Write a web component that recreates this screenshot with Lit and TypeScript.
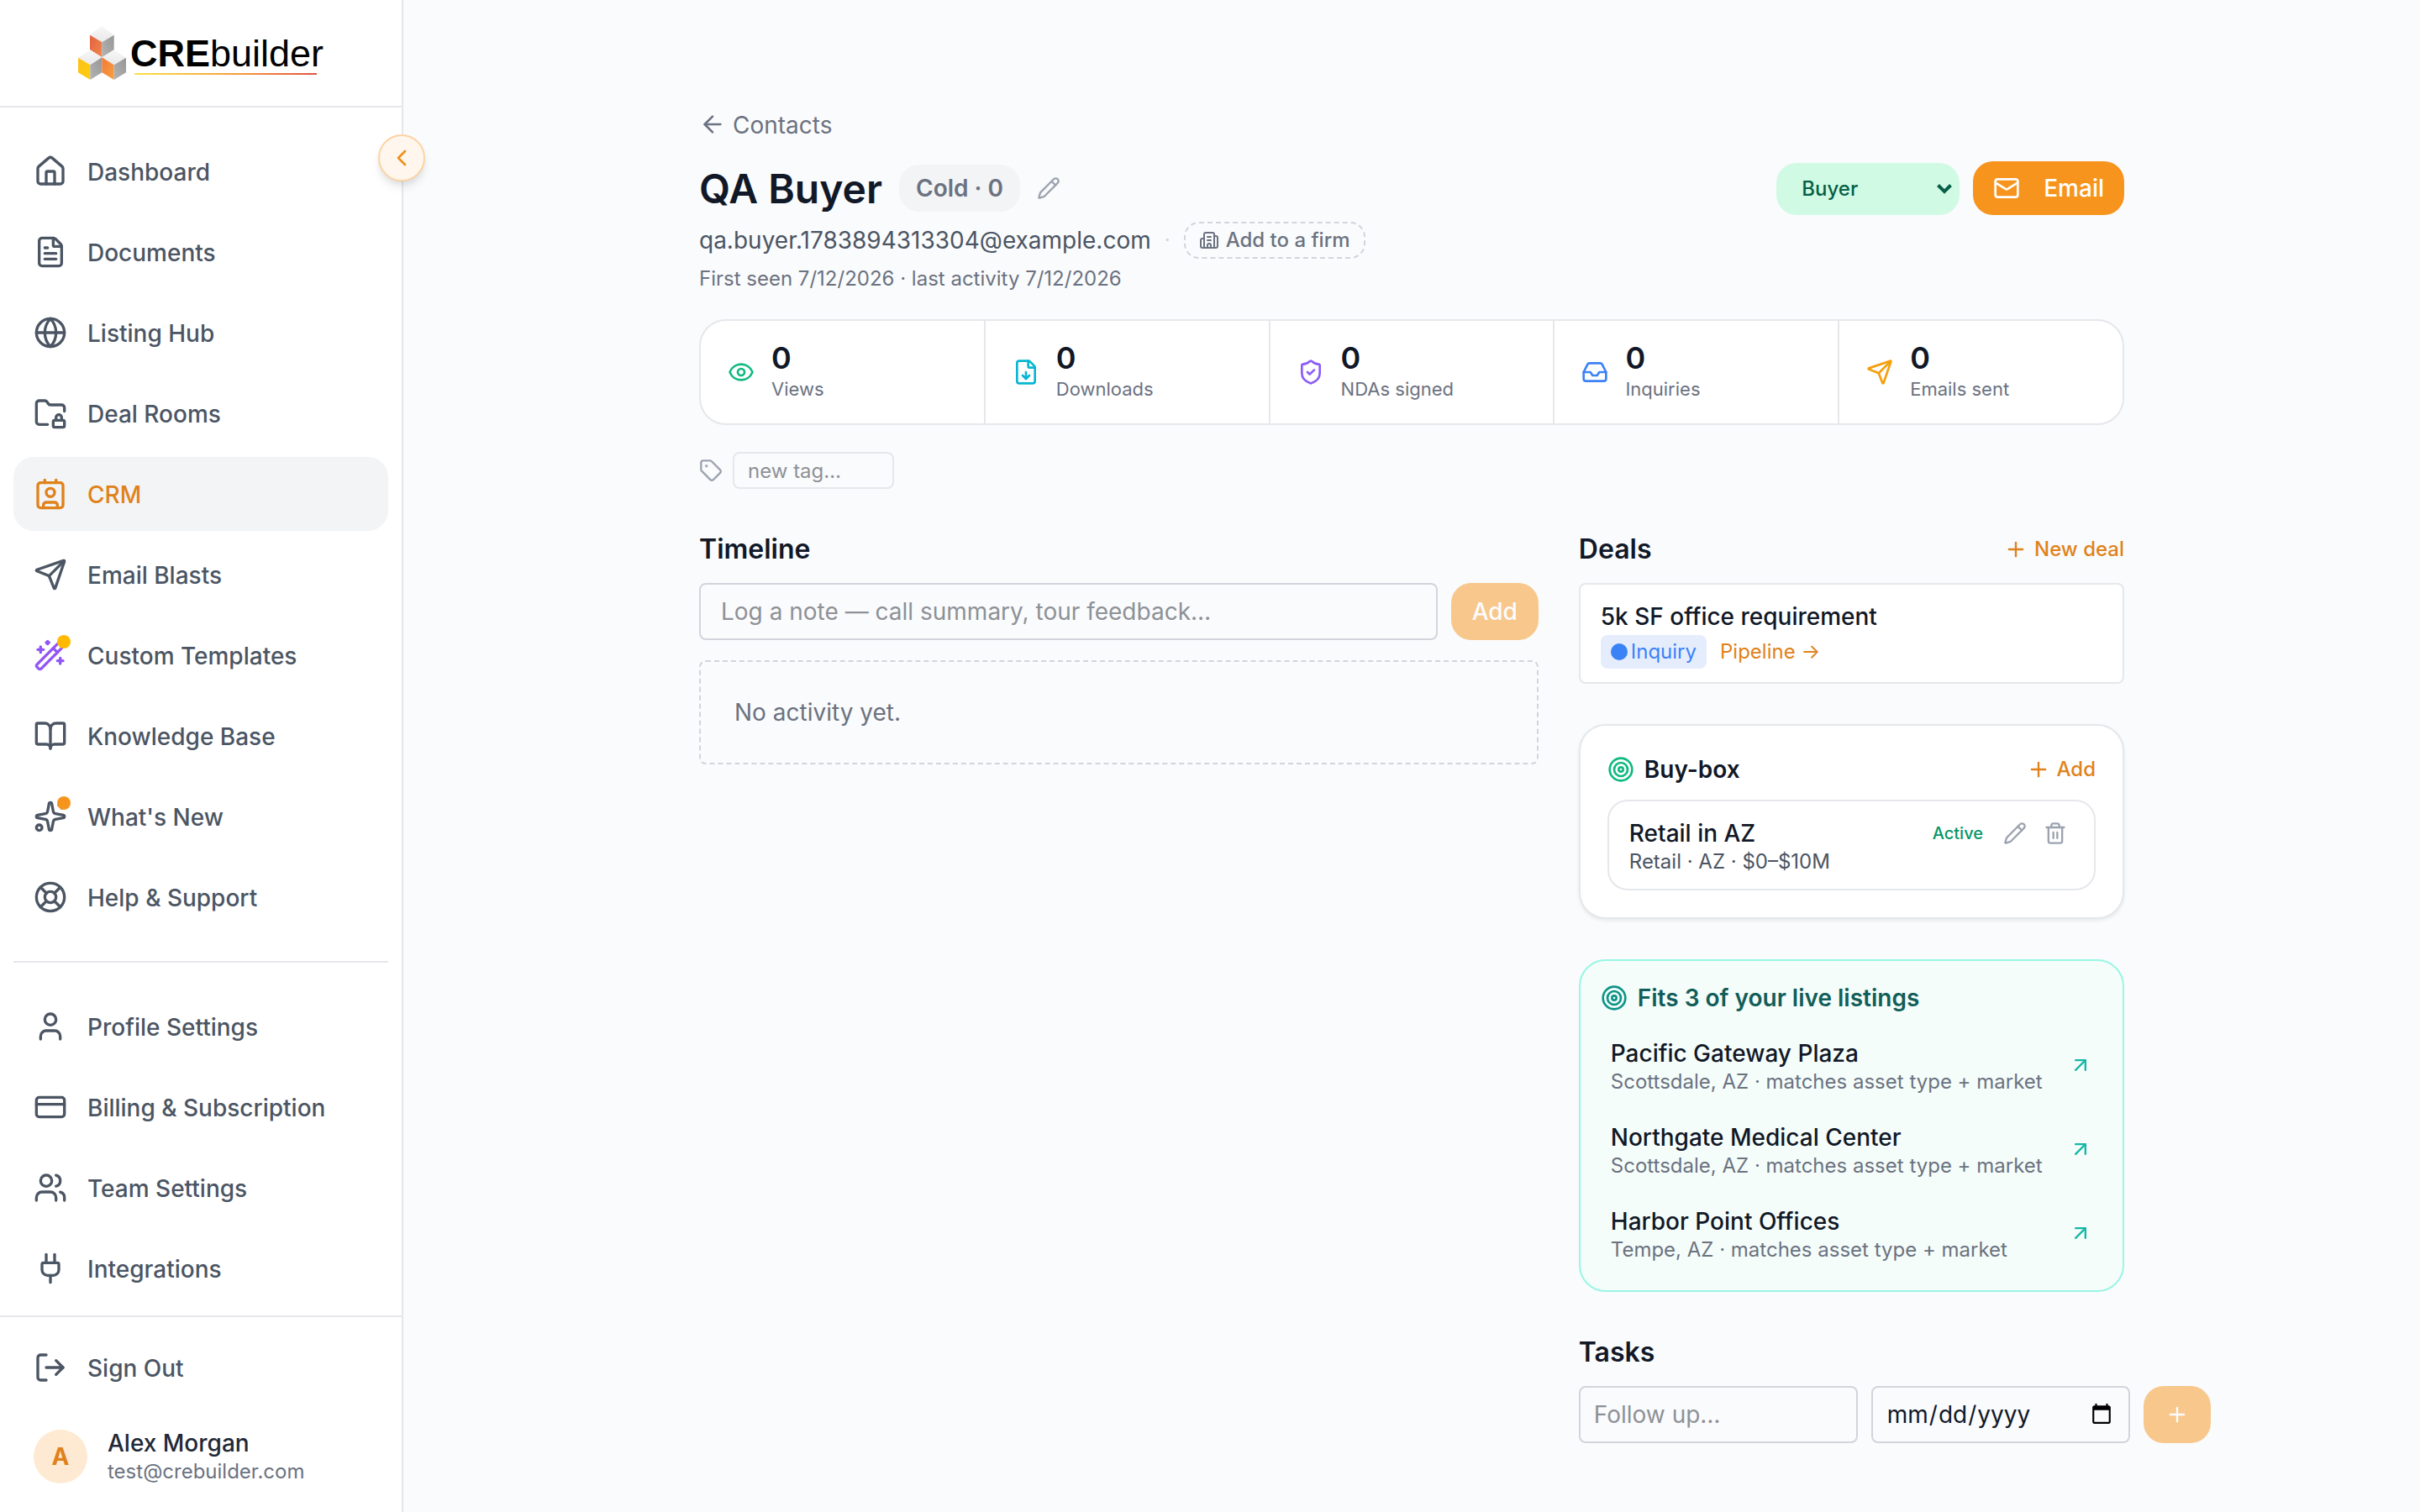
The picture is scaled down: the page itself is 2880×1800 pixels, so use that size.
import { LitElement, html, css, svg, nothing, type SVGTemplateResult } from "lit";
import { customElement, property } from "lit/decorators.js";

const ICONS: Record<string, SVGTemplateResult> = {
  house: svg`<path d="M15 21v-8a1 1 0 0 0-1-1h-4a1 1 0 0 0-1 1v8"/><path d="M3 10a2 2 0 0 1 .709-1.528l7-6a2 2 0 0 1 2.582 0l7 6A2 2 0 0 1 21 10v9a2 2 0 0 1-2 2H5a2 2 0 0 1-2-2z"/>`,
  fileText: svg`<path d="M6 22a2 2 0 0 1-2-2V4a2 2 0 0 1 2-2h8a2.4 2.4 0 0 1 1.704.706l3.588 3.588A2.4 2.4 0 0 1 20 8v12a2 2 0 0 1-2 2z"/><path d="M14 2v5a1 1 0 0 0 1 1h5"/><path d="M10 9H8"/><path d="M16 13H8"/><path d="M16 17H8"/>`,
  globe: svg`<circle cx="12" cy="12" r="10"/><path d="M12 2a14.5 14.5 0 0 0 0 20 14.5 14.5 0 0 0 0-20"/><path d="M2 12h20"/>`,
  folderLock: svg`<rect width="8" height="5" x="14" y="17" rx="1"/><path d="M10 20H4a2 2 0 0 1-2-2V5a2 2 0 0 1 2-2h3.9a2 2 0 0 1 1.69.9l.81 1.2a2 2 0 0 0 1.67.9H20a2 2 0 0 1 2 2v2.5"/><path d="M20 17v-2a2 2 0 1 0-4 0v2"/>`,
  contact: svg`<path d="M16 2v2"/><path d="M7 22v-2a2 2 0 0 1 2-2h6a2 2 0 0 1 2 2v2"/><path d="M8 2v2"/><circle cx="12" cy="11" r="3"/><rect x="3" y="4" width="18" height="18" rx="2"/>`,
  send: svg`<path d="M14.536 21.686a.5.5 0 0 0 .937-.024l6.5-19a.496.496 0 0 0-.635-.635l-19 6.5a.5.5 0 0 0-.024.937l7.93 3.18a2 2 0 0 1 1.112 1.11z"/><path d="m21.854 2.147-10.94 10.939"/>`,
  wand: svg`<path d="m21.64 3.64-1.28-1.28a1.21 1.21 0 0 0-1.72 0L2.36 18.64a1.21 1.21 0 0 0 0 1.72l1.28 1.28a1.2 1.2 0 0 0 1.72 0L21.64 5.36a1.2 1.2 0 0 0 0-1.72"/><path d="m14 7 3 3"/><path d="M5 6v4"/><path d="M19 14v4"/><path d="M10 2v2"/><path d="M7 8H3"/><path d="M21 16h-4"/><path d="M11 3H9"/>`,
  book: svg`<path d="M12 7v14"/><path d="M3 18a1 1 0 0 1-1-1V4a1 1 0 0 1 1-1h5a4 4 0 0 1 4 4 4 4 0 0 1 4-4h5a1 1 0 0 1 1 1v13a1 1 0 0 1-1 1h-6a3 3 0 0 0-3 3 3 3 0 0 0-3-3z"/>`,
  sparkles: svg`<path d="M11.017 2.814a1 1 0 0 1 1.966 0l1.051 5.558a2 2 0 0 0 1.594 1.594l5.558 1.051a1 1 0 0 1 0 1.966l-5.558 1.051a2 2 0 0 0-1.594 1.594l-1.051 5.558a1 1 0 0 1-1.966 0l-1.051-5.558a2 2 0 0 0-1.594-1.594l-5.558-1.051a1 1 0 0 1 0-1.966l5.558-1.051a2 2 0 0 0 1.594-1.594z"/><path d="M20 2v4"/><path d="M22 4h-4"/><circle cx="4" cy="20" r="2"/>`,
  lifeBuoy: svg`<circle cx="12" cy="12" r="10"/><path d="m4.93 4.93 4.24 4.24"/><path d="m14.83 9.17 4.24-4.24"/><path d="m14.83 14.83 4.24 4.24"/><path d="m9.17 14.83-4.24 4.24"/><circle cx="12" cy="12" r="4"/>`,
  user: svg`<path d="M19 21v-2a4 4 0 0 0-4-4H9a4 4 0 0 0-4 4v2"/><circle cx="12" cy="7" r="4"/>`,
  card: svg`<rect width="20" height="14" x="2" y="5" rx="2"/><path d="M2 10h20"/>`,
  users: svg`<path d="M16 21v-2a4 4 0 0 0-4-4H6a4 4 0 0 0-4 4v2"/><circle cx="9" cy="7" r="4"/><path d="M16 3.128a4 4 0 0 1 0 7.744"/><path d="M22 21v-2a4 4 0 0 0-3-3.87"/>`,
  plug: svg`<path d="M12 22v-5"/><path d="M15 8V2"/><path d="M17 8a1 1 0 0 1 1 1v4a4 4 0 0 1-4 4h-4a4 4 0 0 1-4-4V9a1 1 0 0 1 1-1z"/><path d="M9 8V2"/>`,
  logOut: svg`<path d="m16 17 5-5-5-5"/><path d="M21 12H9"/><path d="M9 21H5a2 2 0 0 1-2-2V5a2 2 0 0 1 2-2h4"/>`,
  chevronLeft: svg`<path d="m15 18-6-6 6-6"/>`,
  chevronDown: svg`<path d="m4.5 6.5 7.5 7.5 7.5-7.5" stroke-linecap="butt" stroke-linejoin="miter"/>`,
  arrowLeft: svg`<path d="m12 19-7-7 7-7"/><path d="M19 12H5"/>`,
  arrowUpRight: svg`<path d="M7 7h10v10"/><path d="M7 17 17 7"/>`,
  pencil: svg`<path d="M21.174 6.812a1 1 0 0 0-3.986-3.987L3.842 16.174a2 2 0 0 0-.5.83l-1.321 4.352a.5.5 0 0 0 .623.622l4.353-1.32a2 2 0 0 0 .83-.497z"/><path d="m15 5 4 4"/>`,
  building: svg`<path d="M10 12h4"/><path d="M10 8h4"/><path d="M14 21v-3a2 2 0 0 0-4 0v3"/><path d="M6 10H4a2 2 0 0 0-2 2v7a2 2 0 0 0 2 2h16a2 2 0 0 0 2-2V9a2 2 0 0 0-2-2h-2"/><path d="M6 21V5a2 2 0 0 1 2-2h8a2 2 0 0 1 2 2v16"/>`,
  mail: svg`<path d="m22 7-8.991 5.727a2 2 0 0 1-2.009 0L2 7"/><rect x="2" y="4" width="20" height="16" rx="2"/>`,
  eye: svg`<path d="M2.062 12.348a1 1 0 0 1 0-.696 10.75 10.75 0 0 1 19.876 0 1 1 0 0 1 0 .696 10.75 10.75 0 0 1-19.876 0"/><circle cx="12" cy="12" r="3"/>`,
  fileDown: svg`<path d="M6 22a2 2 0 0 1-2-2V4a2 2 0 0 1 2-2h8a2.4 2.4 0 0 1 1.704.706l3.588 3.588A2.4 2.4 0 0 1 20 8v12a2 2 0 0 1-2 2z"/><path d="M14 2v5a1 1 0 0 0 1 1h5"/><path d="M12 18v-6"/><path d="m9 15 3 3 3-3"/>`,
  shield: svg`<path d="M20 13c0 5-3.5 7.5-7.66 8.95a1 1 0 0 1-.67-.01C7.5 20.5 4 18 4 13V6a1 1 0 0 1 1-1c2 0 4.5-1.2 6.24-2.72a1.17 1.17 0 0 1 1.52 0C14.51 3.81 17 5 19 5a1 1 0 0 1 1 1z"/><path d="m9 12 2 2 4-4"/>`,
  inbox: svg`<path d="M22 12h-6l-2 3h-4l-2-3H2"/><path d="M5.45 5.11 2 12v6a2 2 0 0 0 2 2h16a2 2 0 0 0 2-2v-6l-3.45-6.89A2 2 0 0 0 16.76 4H7.24a2 2 0 0 0-1.79 1.11z"/>`,
  tag: svg`<path d="M12.586 2.586A2 2 0 0 0 11.172 2H4a2 2 0 0 0-2 2v7.172a2 2 0 0 0 .586 1.414l8.704 8.704a2.426 2.426 0 0 0 3.42 0l6.58-6.58a2.426 2.426 0 0 0 0-3.42z"/><circle cx="7.5" cy="7.5" r=".5" fill="currentColor"/>`,
  plus: svg`<path d="M5 12h14"/><path d="M12 5v14"/>`,
  target: svg`<circle cx="12" cy="12" r="10"/><circle cx="12" cy="12" r="6"/><circle cx="12" cy="12" r="2"/>`,
  trash: svg`<path d="M10 11v6"/><path d="M14 11v6"/><path d="M19 6v14a2 2 0 0 1-2 2H7a2 2 0 0 1-2-2V6"/><path d="M3 6h18"/><path d="M8 6V4a2 2 0 0 1 2-2h4a2 2 0 0 1 2 2v2"/>`,
};

const icon = (name: string, size: number, weight = 2) => html`<svg
  width=${size}
  height=${size}
  viewBox="0 0 24 24"
  fill="none"
  stroke="currentColor"
  stroke-width=${weight}
  stroke-linecap="round"
  stroke-linejoin="round"
  aria-hidden="true"
>${ICONS[name]}</svg>`;

const shared = css`
  *,
  *::before,
  *::after {
    box-sizing: border-box;
  }
  svg {
    display: block;
    flex: none;
  }
  a {
    color: inherit;
    text-decoration: none;
  }
  h1,
  h2,
  p,
  ul {
    margin: 0;
    padding: 0;
  }
  ul {
    list-style: none;
  }
  button,
  input,
  select {
    font: inherit;
    color: inherit;
    margin: 0;
  }
  button {
    border: 0;
    padding: 0;
    background: none;
    cursor: pointer;
  }
`;

interface NavItem {
  icon: string;
  label: string;
  active?: boolean;
  dot?: string;
  tint?: string;
}

const MAIN_NAV: NavItem[] = [
  { icon: "house", label: "Dashboard" },
  { icon: "fileText", label: "Documents" },
  { icon: "globe", label: "Listing Hub" },
  { icon: "folderLock", label: "Deal Rooms" },
  { icon: "contact", label: "CRM", active: true },
  { icon: "send", label: "Email Blasts" },
  { icon: "wand", label: "Custom Templates", dot: "amber", tint: "violet" },
  { icon: "book", label: "Knowledge Base" },
  { icon: "sparkles", label: "What's New", dot: "orange" },
  { icon: "lifeBuoy", label: "Help & Support" },
];

const SETTINGS_NAV: NavItem[] = [
  { icon: "user", label: "Profile Settings" },
  { icon: "card", label: "Billing & Subscription" },
  { icon: "users", label: "Team Settings" },
  { icon: "plug", label: "Integrations" },
];

@customElement("side-bar")
export class SideBar extends LitElement {
  static styles = [
    shared,
    css`
      :host {
        position: sticky;
        top: 0;
        display: flex;
        flex-direction: column;
        flex: none;
        box-sizing: border-box;
        width: 480px;
        height: 100vh;
        background: #fff;
        border-right: 2px solid #e5e7eb;
        color: #4b5563;
        font-size: 28px;
        font-weight: 500;
      }
      .brand {
        display: flex;
        flex: none;
        justify-content: center;
        align-items: center;
        gap: 5px;
        height: 128px;
        border-bottom: 2px solid #e5e7eb;
      }
      .wordmark {
        display: flex;
        flex-direction: column;
        padding-top: 4px;
        font-family: "Liberation Sans", Arial, sans-serif;
        font-size: 45px;
        font-weight: 400;
        line-height: 46px;
        color: #000;
      }
      .rule {
        height: 2px;
        margin: 0 8px 0 5px;
        background: linear-gradient(90deg, #fde047, #f59e3b 55%, #e0523f);
      }
      nav {
        flex: 1;
        min-height: 0;
        overflow: hidden;
        padding: 32px 16px 0;
      }
      .list {
        display: flex;
        flex-direction: column;
        gap: 8px;
      }
      .split {
        height: 2px;
        margin: 32px 0;
        background: #e5e7eb;
      }
      .item {
        display: flex;
        align-items: center;
        gap: 24px;
        width: 100%;
        height: 88px;
        padding: 0 24px;
        border-radius: 24px;
        text-align: left;
      }
      .item.active {
        background: #f3f4f6;
        color: #e0821a;
      }
      .label {
        padding-top: 2px;
      }
      .glyph {
        position: relative;
      }
      .violet {
        color: #9155f5;
      }
      .dot {
        position: absolute;
        top: -4px;
        right: -4px;
        width: 16px;
        height: 16px;
        border-radius: 50%;
      }
      .dot.amber {
        background: #ffb900;
      }
      .dot.orange {
        background: #f7941d;
      }
      footer {
        flex: none;
        padding: 16px 16px 32px;
        border-top: 2px solid #e5e7eb;
      }
      .account {
        display: flex;
        align-items: center;
        gap: 24px;
        padding: 28px 24px 0;
      }
      .avatar {
        display: grid;
        place-items: center;
        width: 64px;
        height: 64px;
        border-radius: 50%;
        background: #feead3;
        color: #e0821a;
        font-weight: 700;
      }
      .who {
        line-height: 36px;
        color: #1f2937;
      }
      .mail {
        font-size: 24px;
        font-weight: 400;
        line-height: 32px;
        color: #6b7280;
      }
      .collapse {
        position: absolute;
        top: 160px;
        right: -28px;
        display: grid;
        place-items: center;
        width: 56px;
        height: 56px;
        border: 2px solid #fdd3a3;
        border-radius: 50%;
        background: #fff7ed;
        color: #f0901c;
        box-shadow: 0 8px 12px -2px rgb(0 0 0 / 0.1), 0 4px 8px -4px rgb(0 0 0 / 0.1);
      }
    `,
  ];

  private renderItem(item: NavItem) {
    return html`<li>
      <a class="item ${item.active ? "active" : ""}" href="#" aria-current=${item.active ? "page" : nothing}>
        <span class="glyph ${item.tint ?? ""}"
          >${icon(item.icon, 40)}${item.dot ? html`<span class="dot ${item.dot}"></span>` : nothing}</span
        >
        <span class="label">${item.label}</span>
      </a>
    </li>`;
  }

  render() {
    return html`
      <a class="brand" href="#">
        <svg width="57" height="64" viewBox="42 36 171 192" aria-hidden="true">
          <defs>
            <linearGradient id="top" x1="0" y1="0" x2="0" y2="1">
              <stop offset="0" stop-color="#f7f7f7" />
              <stop offset="1" stop-color="#e9e9e9" />
            </linearGradient>
            <linearGradient id="side" x1="0" y1="1" x2="1" y2="0">
              <stop offset="0" stop-color="#b4b4b4" />
              <stop offset="1" stop-color="#969696" />
            </linearGradient>
            <linearGradient id="red" x1="0" y1="0" x2="1" y2="1">
              <stop offset="0" stop-color="#e2603f" />
              <stop offset="1" stop-color="#f28a4c" />
            </linearGradient>
            <linearGradient id="gold" x1="0" y1="0" x2="1" y2="1">
              <stop offset="0" stop-color="#fbc11c" />
              <stop offset="1" stop-color="#ffce0a" />
            </linearGradient>
            <linearGradient id="amber" x1="0" y1="0" x2="1" y2="1">
              <stop offset="0" stop-color="#ee7a3c" />
              <stop offset="1" stop-color="#f9a03c" />
            </linearGradient>
          </defs>
          <path fill="url(#top)" d="M127 36 170 68 127 94 84 68Z" />
          <path fill="url(#red)" d="M84 68 127 94V148L84 121Z" />
          <path fill="url(#side)" d="M170 68 127 94V148L170 121Z" />
          <path fill="url(#top)" d="M85 121 127 148 85 175 42 149Z" />
          <path fill="url(#gold)" d="M42 149 85 175V228L42 202Z" />
          <path fill="url(#side)" d="M127 148 85 175V228L127 202Z" />
          <path fill="url(#top)" d="M170 121 213 149 170 175 127 148Z" />
          <path fill="url(#amber)" d="M127 148 170 175V228L127 202Z" />
          <path fill="url(#side)" d="M213 149 170 175V228L213 202Z" />
        </svg>
        <span class="wordmark">
          <span><b>CRE</b>builder</span>
          <span class="rule"></span>
        </span>
      </a>
      <nav aria-label="Main">
        <ul class="list">
          ${MAIN_NAV.map((item) => this.renderItem(item))}
        </ul>
        <div class="split"></div>
        <ul class="list">
          ${SETTINGS_NAV.map((item) => this.renderItem(item))}
        </ul>
      </nav>
      <footer>
        <button class="item" type="button">${icon("logOut", 40)}<span class="label">Sign Out</span></button>
        <div class="account">
          <span class="avatar">A</span>
          <div>
            <p class="who">Alex Morgan</p>
            <p class="mail">test@crebuilder.com</p>
          </div>
        </div>
      </footer>
      <button class="collapse" type="button" aria-label="Collapse sidebar">${icon("chevronLeft", 32)}</button>
    `;
  }
}

@customElement("stat-tile")
export class StatTile extends LitElement {
  @property() glyph = "";
  @property() label = "";
  @property({ type: Number }) value = 0;

  static styles = [
    shared,
    css`
      :host {
        display: flex;
        align-items: center;
        gap: 20px;
        padding: 24px 32px;
        background: #fff;
      }
      .eye {
        color: #10b981;
      }
      .fileDown {
        color: #06b6d4;
      }
      .shield {
        color: #8b5cf6;
      }
      .inbox {
        color: #3b82f6;
      }
      .send {
        color: #f59e0b;
      }
      .value {
        font-size: 36px;
        font-weight: 600;
        line-height: 40px;
        color: #111827;
      }
      .label {
        font-size: 22px;
        line-height: 34px;
        color: #6b7280;
      }
    `,
  ];

  render() {
    return html`
      <span class=${this.glyph}>${icon(this.glyph, 32)}</span>
      <div>
        <p class="value">${this.value}</p>
        <p class="label">${this.label}</p>
      </div>
    `;
  }
}

const STATS = [
  { glyph: "eye", label: "Views", value: 0 },
  { glyph: "fileDown", label: "Downloads", value: 0 },
  { glyph: "shield", label: "NDAs signed", value: 0 },
  { glyph: "inbox", label: "Inquiries", value: 0 },
  { glyph: "send", label: "Emails sent", value: 0 },
];

const LISTINGS = [
  { name: "Pacific Gateway Plaza", city: "Scottsdale, AZ" },
  { name: "Northgate Medical Center", city: "Scottsdale, AZ" },
  { name: "Harbor Point Offices", city: "Tempe, AZ" },
];

@customElement("app-root")
export class AppRoot extends LitElement {
  static styles = [
    shared,
    css`
      :host {
        display: flex;
        align-items: flex-start;
        min-height: 100vh;
        background: #fafbfd;
        color: #111827;
        font-family: Inter, "Noto Sans", sans-serif;
        font-size: 28px;
        line-height: 40px;
      }
      side-bar {
        z-index: 1;
      }
      main {
        flex: 1;
        min-width: 0;
        max-width: 1792px;
        margin: 0 auto;
        padding: 128px 48px 80px;
      }
      .back {
        display: flex;
        align-items: center;
        gap: 8px;
        width: fit-content;
        height: 40px;
        color: #6b7280;
      }
      .back span,
      h1 {
        padding-top: 2px;
      }
      .head {
        display: flex;
        justify-content: space-between;
        align-items: flex-start;
        margin-top: 24px;
      }
      .title {
        display: flex;
        align-items: center;
        height: 64px;
      }
      h1 {
        font-size: 48px;
        font-weight: 600;
        line-height: 64px;
      }
      .score {
        margin: 0 20px;
        padding: 8px 20px;
        border-radius: 24px;
        background: #f3f4f6;
        color: #6b7280;
        font-weight: 600;
      }
      .muted {
        color: #9ca3af;
      }
      .contact {
        display: flex;
        align-items: center;
        gap: 16px;
        margin-top: 8px;
        color: #4b5563;
      }
      .sep {
        color: #d1d5db;
        font-size: 24px;
      }
      .firm {
        display: flex;
        align-items: center;
        gap: 8px;
        height: 44px;
        padding: 0 16px;
        border: 2px dashed #d1d5db;
        border-radius: 18px;
        color: #6b7280;
        font-size: 24px;
        font-weight: 500;
      }
      .seen {
        margin-top: 8px;
        font-size: 24px;
        line-height: 32px;
        color: #6b7280;
      }
      .actions {
        display: flex;
        align-items: flex-end;
        gap: 16px;
      }
      .picker {
        position: relative;
        display: flex;
        color: #065f46;
      }
      .picker svg {
        position: absolute;
        top: 20px;
        right: 6px;
        pointer-events: none;
      }
      select {
        appearance: none;
        width: 218px;
        height: 62px;
        padding: 0 30px;
        border: 0;
        border-radius: 24px;
        background: #d1fae5;
        font-size: 24px;
        font-weight: 500;
      }
      .primary {
        display: flex;
        justify-content: center;
        align-items: center;
        border-radius: 24px;
        background: #f7941d;
        color: #fff;
        font-weight: 500;
      }
      .email {
        gap: 28px;
        height: 64px;
        padding: 0 24px;
      }
      .primary:disabled {
        opacity: 0.5;
        cursor: default;
      }
      .stats {
        display: grid;
        grid-template-columns: repeat(5, 1fr);
        gap: 2px;
        margin-top: 32px;
        overflow: hidden;
        border: 2px solid #e5e7eb;
        border-radius: 32px;
        background: #e5e7eb;
      }
      .tags {
        display: flex;
        align-items: center;
        gap: 12px;
        margin-top: 32px;
      }
      input {
        height: 68px;
        padding: 0 24px;
        border: 2px solid #d1d5db;
        border-radius: 8px;
        background: transparent;
      }
      input::placeholder {
        color: #8e9196;
        opacity: 1;
      }
      .tag {
        width: 192px;
        height: 44px;
        padding: 0 16px;
        border-color: #e5e7eb;
        font-size: 24px;
      }
      .columns {
        display: grid;
        grid-template-columns: minmax(0, 1fr) minmax(0, 0.65fr);
        align-items: start;
        gap: 48px;
        margin-top: 48px;
      }
      .side {
        display: grid;
        grid-template-columns: minmax(0, 1fr);
        gap: 48px;
      }
      .bar {
        display: flex;
        justify-content: space-between;
        align-items: center;
      }
      h2 {
        font-size: 32px;
        font-weight: 600;
        line-height: 48px;
      }
      .card h2 {
        display: flex;
        align-items: center;
        gap: 12px;
        font-size: 28px;
        line-height: 40px;
      }
      .row {
        display: flex;
        gap: 16px;
        margin-top: 16px;
      }
      .note {
        flex: 1;
        min-width: 0;
      }
      .add {
        width: 104px;
        height: 68px;
      }
      .empty {
        margin-top: 24px;
        padding: 40px;
        border: 2px dashed #d1d5db;
        border-radius: 8px;
        color: #6b7280;
      }
      .link {
        display: flex;
        align-items: center;
        gap: 8px;
        color: #e0821a;
        font-size: 24px;
        font-weight: 500;
      }
      .deal {
        margin-top: 16px;
        padding: 16px 24px;
        border: 2px solid #e5e7eb;
        border-radius: 8px;
        background: #fff;
      }
      .name {
        font-weight: 500;
      }
      .deal .name {
        line-height: 44px;
      }
      .stage {
        display: flex;
        align-items: center;
        gap: 16px;
        font-size: 24px;
      }
      .chip {
        display: flex;
        align-items: center;
        gap: 4px;
        padding: 0 12px;
        border-radius: 8px;
        background: #e5edfd;
        color: #3b82f6;
      }
      .bullet {
        width: 20px;
        height: 20px;
        border-radius: 50%;
        background: currentColor;
      }
      .pipeline {
        color: #e0821a;
      }
      .card {
        border: 2px solid #e5e7eb;
        border-radius: 32px;
        background: #fff;
      }
      .buybox {
        padding: 32px;
        box-shadow: 0 2px 4px rgb(0 0 0 / 0.08);
      }
      .green {
        color: #10b981;
      }
      .criteria {
        display: flex;
        align-items: flex-start;
        margin-top: 16px;
        padding: 18px 24px;
        border: 2px solid #e5e7eb;
        border-radius: 24px;
      }
      .grow {
        flex: 1;
        min-width: 0;
      }
      .sub {
        font-size: 24px;
        line-height: 28px;
        color: #6b7280;
      }
      .criteria .sub {
        color: #4b5563;
      }
      .status {
        margin-right: 12px;
        font-size: 20px;
        font-weight: 500;
        color: #059669;
      }
      .tool {
        display: grid;
        place-items: center;
        width: 44px;
        height: 40px;
        margin-left: 4px;
        color: #9ca3af;
      }
      .fits {
        padding: 24px 24px 22px;
        border-color: #99f6e4;
        background: #f5fdfa;
      }
      .fits h2 {
        margin-bottom: 14px;
        color: #115e59;
      }
      .teal {
        color: #0d9488;
      }
      .matches {
        display: grid;
        gap: 8px;
      }
      .match {
        display: flex;
        align-items: center;
        padding: 12px;
      }
      .match svg {
        color: #14b8a6;
      }
      .task {
        flex: none;
        width: 332px;
        padding: 0 16px;
      }
      .due {
        flex: none;
        width: 308px;
        padding: 0 16px;
      }
      .plus {
        flex: none;
        width: 80px;
        height: 68px;
      }
    `,
  ];

  render() {
    return html`
      <side-bar></side-bar>
      <main>
        <a class="back" href="#">${icon("arrowLeft", 32)}<span>Contacts</span></a>

        <header class="head">
          <div>
            <div class="title">
              <h1>QA Buyer</h1>
              <span class="score">Cold · 0</span>
              <button class="muted" type="button" aria-label="Edit contact">${icon("pencil", 28)}</button>
            </div>
            <div class="contact">
              <span>qa.buyer.1783894313304@example.com</span>
              <span class="sep">·</span>
              <button class="firm" type="button">${icon("building", 24)}Add to a firm</button>
            </div>
            <p class="seen">First seen 7/12/2026 · last activity 7/12/2026</p>
          </div>
          <div class="actions">
            <div class="picker">
              <select aria-label="Contact type">
                <option selected>Buyer</option>
              </select>
              ${icon("chevronDown", 24, 4)}
            </div>
            <button class="primary email" type="button">${icon("mail", 32)}Email</button>
          </div>
        </header>

        <section class="stats" aria-label="Engagement">
          ${STATS.map((s) => html`<stat-tile .glyph=${s.glyph} .label=${s.label} .value=${s.value}></stat-tile>`)}
        </section>

        <div class="tags">
          <label class="muted" for="tag" aria-label="Add tag">${icon("tag", 28)}</label>
          <input class="tag" id="tag" type="text" placeholder="new tag…" />
        </div>

        <div class="columns">
          <section>
            <h2>Timeline</h2>
            <div class="row">
              <input
                class="note"
                type="text"
                aria-label="Note"
                placeholder="Log a note — call summary, tour feedback…"
              />
              <button class="primary add" type="button" disabled>Add</button>
            </div>
            <p class="empty">No activity yet.</p>
          </section>

          <div class="side">
            <section>
              <div class="bar">
                <h2>Deals</h2>
                <button class="link" type="button">${icon("plus", 28)}New deal</button>
              </div>
              <article class="deal">
                <p class="name">5k SF office requirement</p>
                <div class="stage">
                  <span class="chip"><span class="bullet"></span>Inquiry</span>
                  <a class="pipeline" href="#">Pipeline →</a>
                </div>
              </article>
            </section>

            <section class="card buybox">
              <div class="bar">
                <h2><span class="green">${icon("target", 32)}</span>Buy-box</h2>
                <button class="link" type="button">${icon("plus", 28)}Add</button>
              </div>
              <div class="criteria">
                <div class="grow">
                  <p class="name">Retail in AZ</p>
                  <p class="sub">Retail · AZ · $0–$10M</p>
                </div>
                <span class="status">Active</span>
                <button class="tool" type="button" aria-label="Edit buy-box">${icon("pencil", 28)}</button>
                <button class="tool" type="button" aria-label="Delete buy-box">${icon("trash", 28)}</button>
              </div>
            </section>

            <section class="card fits">
              <h2><span class="teal">${icon("target", 32)}</span>Fits 3 of your live listings</h2>
              <ul class="matches">
                ${LISTINGS.map(
                  (l) => html`<li>
                    <a class="match" href="#">
                      <div class="grow">
                        <p class="name">${l.name}</p>
                        <p class="sub">${l.city} · matches asset type + market</p>
                      </div>
                      ${icon("arrowUpRight", 28)}
                    </a>
                  </li>`,
                )}
              </ul>
            </section>

            <section>
              <h2>Tasks</h2>
              <div class="row">
                <input class="task" type="text" aria-label="Task" placeholder="Follow up…" />
                <input class="due" type="date" aria-label="Due date" />
                <button class="primary plus" type="button" aria-label="Add task" disabled>${icon("plus", 28)}</button>
              </div>
            </section>
          </div>
        </div>
      </main>
    `;
  }
}
